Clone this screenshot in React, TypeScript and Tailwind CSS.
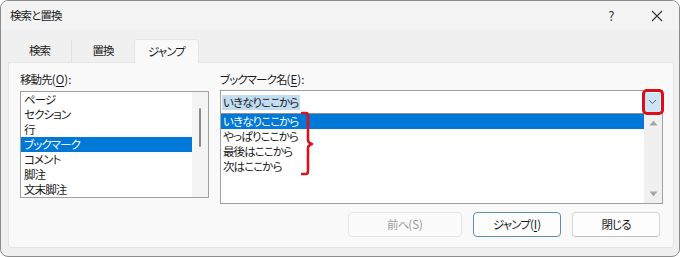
import React from "react"

const leftItems = ["ページ", "セクション", "行", "ブックマーク", "コメント", "脚注", "文末脚注"]
const bookmarks = ["いきなりここから", "やっぱりここから", "最後はここから", "次はここから"]

function Brace() {
  return (
    <svg className="absolute left-[80px] top-[20px]" width="16" height="66" viewBox="0 0 16 66">
      <path
        d="M1 2 H5 Q7 2 7 5 V29 Q7 32 11 33 Q7 34 7 37 V60 Q7 63 5 63 H1"
        fill="none"
        stroke="#d5141d"
        strokeWidth="2.6"
        strokeLinecap="round"
        strokeLinejoin="round"
      />
    </svg>
  )
}

export default function App() {
  return (
    <div
      className="w-[680px] h-[257px] bg-[#f0f0f0] border border-[#8c8c8c] rounded-[8px] overflow-hidden flex flex-col text-[11.5px] tracking-[-0.9px] text-[#1a1a1a] [font-feature-settings:'palt']"
      style={{ fontFamily: '"Noto Sans CJK JP", "Noto Sans", sans-serif' }}
    >
      {/* title bar */}
      <div className="h-[29px] shrink-0 flex items-center pl-[9px] bg-[#f3f3f3]">
        <span className="leading-none">検索と置換</span>
        <div className="ml-auto flex items-center">
          <span className="w-[46px] text-center text-[13px] text-[#333]">?</span>
          <span className="w-[46px] flex justify-center mr-[-1px]">
            <svg width="12" height="12" viewBox="0 0 12 12">
              <path d="M1 1 L11 11 M11 1 L1 11" stroke="#333" strokeWidth="1.1" />
            </svg>
          </span>
        </div>
      </div>

      <div className="flex-1 flex flex-col pl-[7px] pr-[5px] pt-[8px] pb-[8px]">
        {/* tabs */}
        <div className="h-[24px] flex items-end">
          <div className="w-[64px] h-[22px] flex items-center justify-center border-r border-[#e2e2e2] text-[#222]">検索</div>
          <div className="w-[62px] h-[22px] flex items-center justify-center text-[#222]">置換</div>
          <div className="w-[65px] h-[24px] flex items-center justify-center bg-[#f9f9f9] border border-b-0 border-[#e5e5e5] rounded-t-[3px] mb-[-1px] relative z-10">
            ジャンプ
          </div>
        </div>

        {/* panel */}
        <div className="flex-1 bg-[#f9f9f9] border border-[#e5e5e5] rounded-b-[3px] rounded-tr-[3px] pl-[11px] pr-[10px] pt-[8px] flex flex-col">
          <div className="flex gap-[11px]">
            {/* left column */}
            <div className="w-[189px] flex flex-col">
              <div className="h-[16px] leading-[16px]">
                移動先<span className="tracking-normal">(<span className="underline underline-offset-2">O</span>):</span>
              </div>
              <div className="mt-[4px] h-[107px] bg-white border border-[#a0a0a0] flex overflow-hidden">
                <div className="flex-1 flex flex-col">
                  {leftItems.map((t, i) => (
                    <div
                      key={t}
                      className={
                        "h-[15px] leading-[15px] pl-[3px] shrink-0 " +
                        (i === 3 ? "bg-[#0078d7] text-white" : "")
                      }
                    >
                      {t}
                    </div>
                  ))}
                </div>
                <div className="w-[16px] bg-[#f4f4f4] flex justify-center pt-[16px]">
                  <div className="w-[2px] h-[39px] bg-[#8a8a8a] rounded-full" />
                </div>
              </div>
            </div>

            {/* right column */}
            <div className="flex-1 flex flex-col">
              <div className="h-[16px] leading-[16px]">
                ブックマーク名<span className="tracking-normal">(<span className="underline underline-offset-2">E</span>):</span>
              </div>
              <div className="mt-[3px] h-[114px] border border-[#a0a0a0] bg-white flex flex-col relative">
                {/* edit */}
                <div className="h-[22px] flex items-center pl-[1px] pr-[2px]">
                  <span className="bg-[#c2dcf2] h-[15px] leading-[15px] px-[1px]">いきなりここから</span>
                  <div className="ml-auto w-[15px] h-[19px] bg-[#cce4f7] flex items-center justify-center">
                    <svg width="9" height="6" viewBox="0 0 9 6">
                      <path d="M1 1 L4.5 4.5 L8 1" fill="none" stroke="#666" strokeWidth="1" />
                    </svg>
                  </div>
                </div>
                {/* list */}
                <div className="flex-1 border-t border-[#8f8f8f] flex">
                  <div className="flex-1 flex flex-col">
                    {bookmarks.map((t, i) => (
                      <div
                        key={t}
                        className={
                          "h-[15px] leading-[15px] pl-[2px] shrink-0 " +
                          (i === 0 ? "bg-[#0078d7] text-white" : "")
                        }
                      >
                        {t}
                      </div>
                    ))}
                  </div>
                  <div className="w-[18px] bg-[#f0f0f0] flex flex-col items-center justify-between py-[6px]">
                    <svg width="9" height="6" viewBox="0 0 9 6">
                      <path d="M0.5 5.5 L4.5 0.5 L8.5 5.5 Z" fill="#a6a6a6" />
                    </svg>
                    <svg width="9" height="6" viewBox="0 0 9 6">
                      <path d="M0.5 0.5 L4.5 5.5 L8.5 0.5 Z" fill="#a6a6a6" />
                    </svg>
                  </div>
                </div>

                {/* annotations */}
                <div className="absolute right-[-2px] top-[-2px] w-[22px] h-[26px] border-[3px] border-[#dc0f18] rounded-[5px]" />
                <Brace />
              </div>
            </div>
          </div>

          {/* buttons */}
          <div className="mt-[8px] flex justify-end gap-[11px] pr-[3px]">
            <div className="w-[114px] h-[25px] flex items-center justify-center bg-[#fbfbfb] border border-[#e5e5e5] rounded-[4px] text-[#9a9a9a]">
              前へ<span className="tracking-normal">(S)</span>
            </div>
            <div className="w-[88px] h-[25px] flex items-center justify-center bg-[#fdfdfd] border border-[#5d8fb3] rounded-[4px]">
              ジャンプ<span className="tracking-normal">(<span className="underline underline-offset-2">I</span>)</span>
            </div>
            <div className="w-[88px] h-[25px] flex items-center justify-center bg-[#fdfdfd] border border-[#d6d6d6] border-b-[#c4c4c4] rounded-[4px]">
              閉じる
            </div>
          </div>
        </div>
      </div>
    </div>
  )
}
